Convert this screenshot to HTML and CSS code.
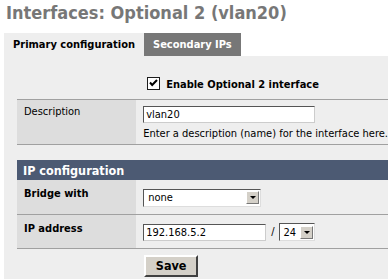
FILE: index.html
```html
<!DOCTYPE html>
<html lang="en">
<head>
    <meta charset="UTF-8">
    <title>Interfaces: Optional 2 (vlan20)</title>
    <link rel="stylesheet" href="styles.css">
</head>
<body>
    <h1 class="page-title">Interfaces: Optional 2 (vlan20)</h1>

    <div class="tabs">
        <span class="tab active">Primary configuration</span>
        <span class="tab">Secondary IPs</span>
    </div>

    <div class="panel">
        <table class="form-table">
            <tr class="enable-row">
                <td class="label-cell blank"></td>
                <td class="field-cell">
                    <label class="enable">
                        <span class="check-box">
                            <svg width="9" height="9" viewBox="0 0 9 9"><path d="M1 3.5 L3.2 6 L8 1" fill="none" stroke="#000" stroke-width="2"/></svg>
                        </span>
                        Enable Optional 2 interface
                    </label>
                </td>
            </tr>
            <tr class="row desc-row">
                <td class="label-cell">Description</td>
                <td class="field-cell top">
                    <input type="text" class="text-input desc-input" value="vlan20">
                    <div class="hint">Enter a description (name) for the interface here.</div>
                </td>
            </tr>
            <tr class="spacer"><td colspan="2"></td></tr>
            <tr class="section-head"><td colspan="2">IP configuration</td></tr>
            <tr class="row field-row">
                <td class="label-cell bold">Bridge with</td>
                <td class="field-cell">
                    <div class="select bridge-select"><span class="select-value">none</span><span class="select-btn"></span></div>
                </td>
            </tr>
            <tr class="row field-row">
                <td class="label-cell bold">IP address</td>
                <td class="field-cell">
                    <div class="ip-line">
                        <input type="text" class="text-input ip-input" value="192.168.5.2">
                        <span class="slash">/</span>
                        <div class="select mask-select"><span class="select-value">24</span><span class="select-btn"></span></div>
                    </div>
                </td>
            </tr>
            <tr class="save-row">
                <td class="label-cell blank"></td>
                <td class="field-cell top"><button class="save-btn">Save</button></td>
            </tr>
        </table>
    </div>
</body>
</html>
```
FILE: styles.css
```css
body {
    margin: 0 0 0 4px;
    background: #fff;
    font-family: "DejaVu Sans Condensed", "DejaVu Sans", sans-serif;
    font-size: 11px;
    color: #000;
    overflow: hidden;
}
.page-title {
    margin: 0 0 0 2px;
    height: 33px;
    line-height: 25px;
    font-size: 18px;
    font-weight: bold;
    color: #777;
}
.tabs {
    display: flex;
    height: 23px;
}
.tab {
    display: flex;
    align-items: center;
    padding: 0 9px 0 9px;
    background: #777;
    color: #fff;
    font-weight: bold;
    font-size: 11px;
}
.tab.active {
    background: #eee;
    color: #000;
    width: 122px;
}
.panel {
    background: #eee;
    padding: 14px 0 20px 13px;
}
.form-table {
    width: 100%;
    border-collapse: collapse;
}
.form-table td {
    padding: 0;
}
.form-table .label-cell {
    width: 113px;
    background: #ddd;
    padding: 5px 0 0 7px;
    vertical-align: top;
}
.form-table .label-cell.blank {
    background: transparent;
}
.form-table .label-cell.bold {
    font-weight: bold;
    padding-top: 7px;
}
.form-table .field-cell {
    padding: 0 0 0 7px;
    vertical-align: middle;
}
.form-table .field-cell.top {
    vertical-align: top;
    padding-top: 6px;
}
.enable-row {
    height: 29px;
}
.enable {
    display: flex;
    align-items: center;
    font-weight: bold;
    padding-left: 4px;
    padding-top: 1px;
}
.check-box {
    box-sizing: border-box;
    width: 13px;
    height: 13px;
    margin: 0 6px 2px 0;
    border: 1px solid #1c1c1c;
    background: #fff;
    display: flex;
    align-items: center;
    justify-content: center;
}
.row td {
    border-bottom: 1px solid #a0a0a0;
}
.desc-row {
    height: 45px;
}
.desc-row td {
    border-top: 1px solid #a0a0a0;
}
.text-input {
    box-sizing: border-box;
    height: 17px;
    border: 1px solid;
    border-color: #555 #ccc #ccc #555;
    padding: 0 2px;
    margin: 0;
    font: inherit;
    background: #fff;
}
.desc-input {
    width: 172px;
    display: block;
}
.hint {
    margin-top: 4px;
    white-space: nowrap;
}
.spacer {
    height: 16px;
}
.section-head {
    height: 20px;
}
.section-head td {
    background: #4c5a73;
    color: #fff;
    font-weight: bold;
    font-size: 12.5px;
    padding-left: 6px !important;
}
.field-row {
    height: 34px;
}
.select {
    box-sizing: border-box;
    display: flex;
    align-items: center;
    height: 18px;
    margin-top: 2px;
    border: 1px solid;
    border-color: #555 #ddd #ddd #555;
    background: #fff;
    padding: 0 1px 0 4px;
}
.select-value {
    flex: 1;
}
.select-btn {
    width: 13px;
    height: 13px;
    background: #d4d0c8;
    border: 1px solid #fff;
    border-right-color: #777;
    border-bottom-color: #777;
    box-sizing: border-box;
    position: relative;
}
.select-btn::after {
    content: "";
    position: absolute;
    left: 3px;
    top: 4px;
    border-left: 3px solid transparent;
    border-right: 3px solid transparent;
    border-top: 3px solid #000;
}
.bridge-select {
    width: 118px;
}
.ip-line {
    display: flex;
    align-items: center;
}
.ip-line .ip-input {
    width: 123px;
    margin-top: 2px;
}
.slash {
    margin: 0 4px 0 5px;
}
.mask-select {
    width: 36px;
}
.save-btn {
    height: 22px;
    width: 54px;
    margin-left: 1px;
    font: inherit;
    font-weight: bold;
    font-size: 12.5px;
    background: #d4d0c8;
    border: 2px solid;
    border-color: #fff #404040 #404040 #fff;
}
```
